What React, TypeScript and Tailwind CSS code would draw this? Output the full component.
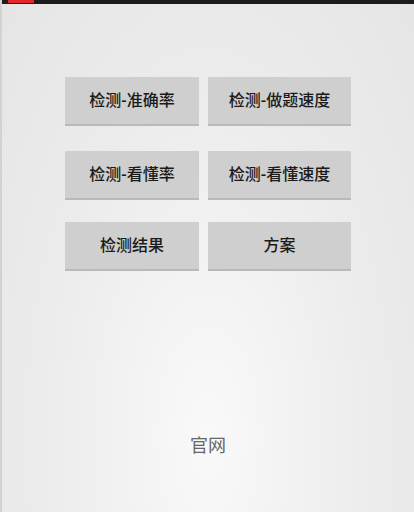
import React from 'react';

const rows: [string, string][] = [
  ['检测-准确率', '检测-做题速度'],
  ['检测-看懂率', '检测-看懂速度'],
  ['检测结果', '方案'],
];

const Btn: React.FC<{ label: string; wide?: boolean }> = ({ label, wide }) => (
  <button
    className={`${wide ? 'w-[143px]' : 'w-[134px]'} h-[49px] bg-[#cfcfcf] border-b-2 border-[#b9b9b9] text-[16px] font-medium text-[#1a1a1a] flex items-center justify-center`}
  >
    {label}
  </button>
);

export default function App() {
  return (
    <div
      className="w-[414px] h-[512px] flex flex-col bg-[radial-gradient(ellipse_at_50%_85%,#f9f9f9_0%,#ececec_55%,#e5e5e5_100%)] border-l-2 border-[#d2d2d2] overflow-hidden"
      style={{ fontFamily: 'Roboto, "Noto Sans CJK SC", sans-serif' }}
    >
      {/* status strip */}
      <div className="h-[4px] bg-[#1c1c1c] flex shrink-0">
        <div className="ml-[6px] w-[26px] h-[3px] bg-[#e3262a]" />
      </div>

      {/* button grid */}
      <div className="flex flex-col pl-[63px] pt-[73px] gap-[25px]">
        {rows.map((r, i) => (
          <div key={i} className={`flex gap-[9px] ${i === 2 ? '-mt-[3px]' : ''}`}>
            <Btn label={r[0]} />
            <Btn label={r[1]} wide />
          </div>
        ))}
      </div>

      <div className="flex-1" />

      {/* footer link */}
      <div className="flex justify-center pb-[53px]">
        <span className="text-[18px] text-[#666666]">官网</span>
      </div>
    </div>
  );
}
